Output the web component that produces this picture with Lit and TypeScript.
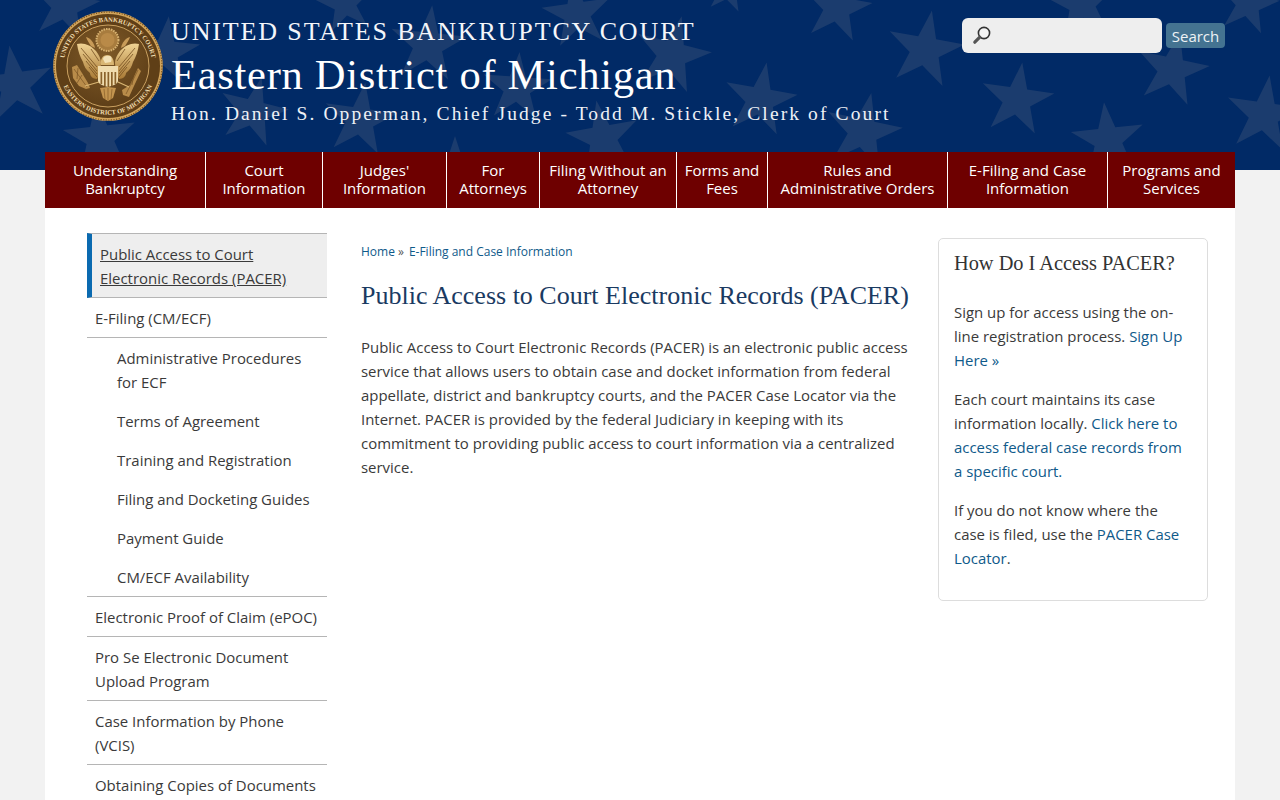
import { LitElement, html, css, svg } from "lit";
import { customElement } from "lit/decorators.js";

const STARS: [number, number, number, number][] = [
  [15, 85, 40, -8], [65, 6, 36, 10], [165, 52, 36, 6], [100, 138, 38, -6], [253, 112, 36, 14],
  [360, 120, 38, 8], [345, 4, 30, -10], [428, 45, 40, 6], [577, 14, 36, -8], [672, 55, 40, 14],
  [517, 88, 36, 4], [603, 138, 38, -10], [760, 100, 38, 10], [837, 8, 36, 10], [863, 132, 40, 12],
  [925, 50, 40, 10], [1017, 100, 38, 8], [1172, 70, 38, 12], [1082, 4, 36, -8], [1264, 115, 40, 8],
  [1108, 140, 38, -6], [1248, 4, 32, 12], [455, 168, 32, 0], [728, -10, 24, 10],
];

function starPoints(cx: number, cy: number, r: number, rot: number) {
  const pts: string[] = [];
  for (let i = 0; i < 10; i++) {
    const rad = i % 2 === 0 ? r : r * 0.385;
    const a = ((-90 + rot + i * 36) * Math.PI) / 180;
    pts.push(`${(cx + rad * Math.cos(a)).toFixed(1)},${(cy + rad * Math.sin(a)).toFixed(1)}`);
  }
  return pts.join(" ");
}

const wing = svg`
  <path fill="url(#gold)" d="M24 33 C30 31 38 34 43 40 C46 44 48 48 48 52 L47 62 L44 68 C40 68 37 65 37 62 C33 59 31 55 30 51 C27 46 25 40 24 33 Z" />
  <path fill="none" stroke="#6f4a1c" stroke-width=".75" d="M28 37 L44 56 M30 43 L44 60 M33 50 L44 63 M36 56 L44 66 M38 38 L46 50" />
  <path fill="#c89b58" d="M33 26 C37 27 41 31 42 37 L38 35 C36 32 34 29 33 26 Z" />`;

const seal = html`<svg class="seal" viewBox="0 0 110 110" aria-label="Seal">
  <defs>
    <radialGradient id="disc" cx="45%" cy="36%" r="72%">
      <stop offset="0" stop-color="#7f5a28" /><stop offset="1" stop-color="#5b3c16" />
    </radialGradient>
    <linearGradient id="gold" x1="0" y1="0" x2="0" y2="1">
      <stop offset="0" stop-color="#f0d394" /><stop offset="1" stop-color="#a97a36" />
    </linearGradient>
    <path id="arcTop" d="M 10.7 55 A 44.3 44.3 0 0 1 99.3 55" />
    <path id="arcBot" d="M 6.3 55 A 48.7 48.7 0 0 0 103.7 55" />
  </defs>
  <circle cx="55" cy="55" r="54.8" fill="#d2a55c" />
  <circle cx="55" cy="55" r="54" fill="none" stroke="#7a5220" stroke-width="1.2" stroke-dasharray="1.3 1.3" />
  <circle cx="55" cy="55" r="52" fill="#5f3f17" />
  <circle cx="55" cy="55" r="41" fill="url(#disc)" stroke="#c9a060" stroke-width="1" />
  <text class="st"><textPath href="#arcTop" startOffset="50%" text-anchor="middle">UNITED STATES BANKRUPTCY COURT</textPath></text>
  <text class="st"><textPath href="#arcBot" startOffset="50%" text-anchor="middle">EASTERN DISTRICT OF MICHIGAN</textPath></text>
  <circle cx="54.5" cy="29" r="11" fill="#a87c3e" stroke="#d8b372" stroke-width="2" stroke-dasharray="1.5 1" />
  <circle cx="54.5" cy="29" r="7" fill="#b98a48" />
  ${wing}
  <g transform="translate(110 0) scale(-1 1)">${wing}</g>
  <path fill="#d9b673" d="M48 54 C47 48 50 44 54 44 C58 44 61 47 61 54 Z" />
  <path fill="#f3e2b8" d="M50 48 C50 45 54 44 57 45 C59 46 59 49 58 51 L52 52 Z" />
  <path fill="#f0dcae" d="M45 55 H65 V70 C65 73 59 75 55 76 C51 75 45 73 45 70 Z" />
  <path fill="#8a632c" d="M47.5 61h1.7v12h-1.7zM51 61h1.7v14H51zM54.5 61h1.7v15h-1.7zM58 61h1.7v14H58zM61.5 61h1.7v12h-1.7z" />
  <path fill="#c4954f" d="M47 77 L55 76 L63 77 L60 87 L55 90 L50 87 Z" />
  <path fill="none" stroke="#7a5220" stroke-width=".6" d="M51 78 L52 88 M55 77 V89 M59 78 L58 88" />
  <path fill="#b98c4a" d="M19 56 L24 54 L29 62 L35 72 L37 77 L33 78 L26 75 L20 67 Z" />
  <path fill="none" stroke="#6f4a1c" stroke-width=".6" d="M21 58 L34 76 M25 57 L24 68 M29 64 L24 72" />
  <path fill="#b98c4a" d="M85 57 L88 60 L81 75 L76 86 L70 84 L69 79 L77 74 Z" />
  <path fill="none" stroke="#6f4a1c" stroke-width=".6" d="M85 59 L73 83 M81 62 L79 74" />
  <path fill="none" stroke="#d9b673" stroke-width="1.3" d="M32 75 L46 71 M65 71 L76 76" />
</svg>`;

const glass = html`<svg class="glass" viewBox="0 0 20 20" aria-hidden="true">
  <circle cx="12" cy="8" r="5.6" fill="#f4f4f4" stroke="#333" stroke-width="1.6" />
  <path d="M7.8 12.2 L2.8 17.2" stroke="#555" stroke-width="3.2" stroke-linecap="round" />
</svg>`;

const NAV: [string, string, number][] = [
  ["Understanding", "Bankruptcy", 161], ["Court", "Information", 117], ["Judges'", "Information", 124],
  ["For", "Attorneys", 93], ["Filing Without an", "Attorney", 137], ["Forms and", "Fees", 91],
  ["Rules and", "Administrative Orders", 180], ["E-Filing and Case", "Information", 160], ["Programs and", "Services", 127],
];

const SIDE: [string, string][] = [
  ["sub", "Administrative Procedures for ECF"], ["sub", "Terms of Agreement"], ["sub", "Training and Registration"],
  ["sub", "Filing and Docketing Guides"], ["sub", "Payment Guide"], ["sub last", "CM/ECF Availability"],
  ["top", "Electronic Proof of Claim (ePOC)"], ["top", "Pro Se Electronic Document Upload Program"],
  ["top", "Case Information by Phone (VCIS)"], ["top", "Obtaining Copies of Documents"],
];

@customElement("app-root")
export class AppRoot extends LitElement {
  static styles = css`
    :host { display: block; height: 800px; overflow: hidden; background: #f2f2f2; font-family: "Open Sans", sans-serif; color: #3a3a3a; font-size: 14.95px; line-height: 24px; }
    a { color: #0f5a8a; text-decoration: none; }
    .hdr { position: relative; height: 170px; background: #012a66; overflow: hidden; }
    .stars { position: absolute; inset: 0; width: 1280px; height: 170px; }
    .stars polygon { fill: #1b3c6e; }
    .hdr-in { position: relative; display: flex; padding: 11px 55px 0 53px; }
    .seal { width: 110px; height: 110px; flex: none; }
    .st { font: 700 6.5px "Liberation Serif", serif; fill: #efdcb0; }
    .titles { margin-left: 8px; color: #fff; font-family: "Liberation Serif", serif; flex: 1; }
    .t1 { font-size: 26px; line-height: 28px; letter-spacing: 1.87px; margin-top: 7px; color: #f4f6fa; }
    .t2 { font-size: 42.5px; line-height: 46px; margin-top: 6px; letter-spacing: .72px; }
    .t3 { font-size: 19.5px; line-height: 24px; letter-spacing: 2.11px; margin-top: 4px; color: #eef1f6; }
    .search { display: flex; align-items: center; gap: 4px; margin-top: 7px; height: 35px; }
    .box { width: 200px; height: 35px; box-sizing: border-box; background: #eee; border-radius: 6px; padding: 7px 10px; }
    .glass { display: block; width: 20px; height: 20px; }
    .btn { box-sizing: border-box; width: 59px; height: 25px; padding-top: 1px; background: #447391; color: #eef2f5; border-radius: 4px; font-size: 15px; line-height: 24px; text-align: center; }
    .wrap { position: relative; margin: -18px 45px 0; background: #fff; min-height: 648px; }
    nav { display: flex; background: #6e0000; height: 56px; }
    nav div { box-sizing: border-box; border-right: 1px solid #fff; padding-top: 9px; color: #fff; font-size: 15px; line-height: 18px; text-align: center; white-space: nowrap; }
    nav div:last-child { border-right: 0; }
    .cols { display: grid; grid-template-columns: 274px 577px 270px; padding: 25px 27px 0 42px; }
    ul { list-style: none; margin: 0; padding: 0; width: 240px; }
    .cur { border-top: 1px solid #b5b5b5; border-bottom: 1px solid #b5b5b5; border-left: 5px solid #0a6ab0; background: #eee; padding: 8px 8px 7px; text-decoration: underline; color: #3a3a3a; }
    .item { padding: 8px 8px 7px; }
    .line { border-bottom: 1px solid #b5b5b5; }
    .sub { padding: 8px 8px 7px 30px; }
    main { padding: 6px 28px 0 0; }
    .crumb { font-size: 12px; line-height: 18px; color: #555; margin-top: 4px; }
    .crumb span { margin: 0 5px 0 3px; }
    h1 { font: 400 26px/32px "Liberation Serif", serif; color: #1a3a62; margin: 19px 0 23px; white-space: nowrap; }
    p { margin: 0 0 15px; }
    .card { box-sizing: border-box; margin-top: 5px; height: 363px; border: 1px solid #ddd; border-radius: 5px; padding: 11px 15px; }
    h2 { font: 400 20.35px/26px "Liberation Serif", serif; color: #333; margin: 0 0 24px; white-space: nowrap; }
  `;

  render() {
    return html`
      <div class="hdr">
        <svg class="stars" viewBox="0 0 1280 170" aria-hidden="true">
          ${STARS.map(([x, y, r, o]) => svg`<polygon points=${starPoints(x, y, r, o)} />`)}
        </svg>
        <div class="hdr-in">
          ${seal}
          <div class="titles">
            <div class="t1">UNITED STATES BANKRUPTCY COURT</div>
            <div class="t2">Eastern District of Michigan</div>
            <div class="t3">Hon. Daniel S. Opperman, Chief Judge - Todd M. Stickle, Clerk of Court</div>
          </div>
          <div class="search">
            <div class="box">${glass}</div>
            <div class="btn">Search</div>
          </div>
        </div>
      </div>
      <div class="wrap">
        <nav>
          ${NAV.map(([a, b, w]) => html`<div style="width:${w}px">${a}<br />${b}</div>`)}
        </nav>
        <div class="cols">
          <ul>
            <li class="cur">Public Access to Court Electronic Records (PACER)</li>
            <li class="item line">E-Filing (CM/ECF)</li>
            ${SIDE.map(([k, t], i) => {
              const isLast = k === "sub last";
              const cls = k.startsWith("sub") ? "sub" : "item";
              const line = isLast || (k === "top" && i < SIDE.length - 1) ? " line" : "";
              return html`<li class="${cls}${line}">${t}</li>`;
            })}
          </ul>
          <main>
            <div class="crumb"><a href="#">Home</a><span>»</span><a href="#">E-Filing and Case Information</a></div>
            <h1>Public Access to Court Electronic Records (PACER)</h1>
            <p>Public Access to Court Electronic Records (PACER) is an electronic public access service that allows users to obtain case and docket information from federal appellate, district and bankruptcy courts, and the PACER Case Locator via the Internet. PACER is provided by the federal Judiciary in keeping with its commitment to providing public access to court information via a centralized service.</p>
          </main>
          <aside class="card">
            <h2>How Do I Access PACER?</h2>
            <p>Sign up for access using the on-line registration process. <a href="#">Sign Up Here »</a></p>
            <p>Each court maintains its case information locally. <a href="#">Click here to access federal case records from a specific court.</a></p>
            <p>If you do not know where the case is filed, use the <a href="#">PACER Case Locator</a>.</p>
          </aside>
        </div>
      </div>
    `;
  }
}
